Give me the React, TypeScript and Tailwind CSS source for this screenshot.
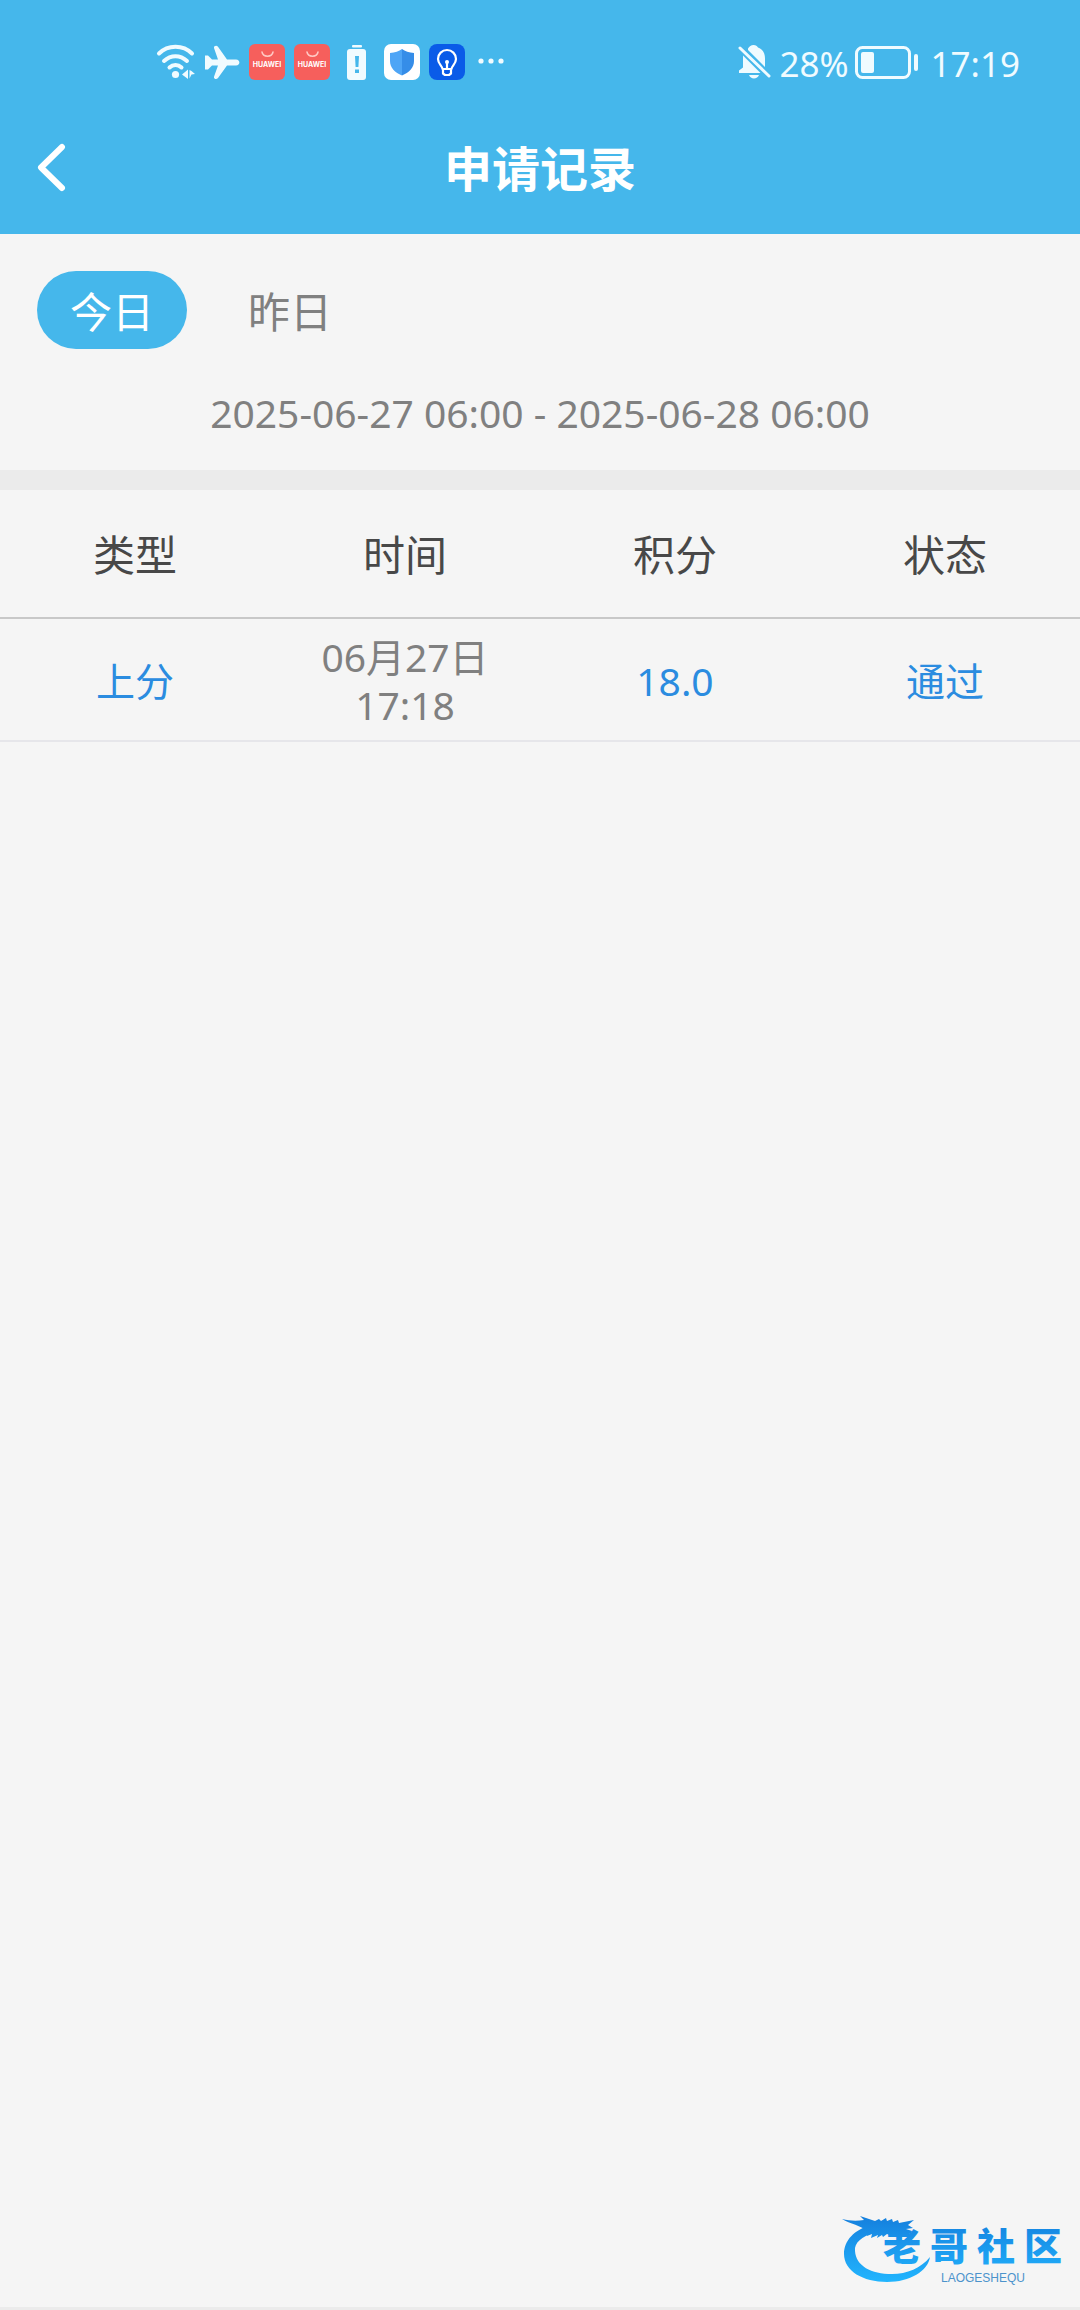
import React, { useState } from "react";

const tabs = ["今日", "昨日"];
const columns = ["类型", "时间", "积分", "状态"];
const records = [
  { type: "上分", date: "06月27日", time: "17:18", score: "18.0", status: "通过" },
];

function WifiIcon() {
  return (
    <svg width="39" height="36" viewBox="0 0 39 36" fill="none" stroke="#f0fbff" strokeWidth="4" strokeLinecap="round">
      <path d="M3 9.500C12 .5 27 .5 36 9.500" />
      <path d="M8 17c7-6.500 16-6.500 23 0" />
      <path d="M13.500 23.500c3.500-3.500 8.500-3.500 12 0" />
      <circle cx="19.500" cy="30.500" r="3.600" fill="#f0fbff" stroke="none" />
      <path d="M26 30.500l6-5v9.500zM33.500 26v8.500l2-4 3.500-.5-3.500-3z" fill="#f0fbff" stroke="none" />
    </svg>
  );
}

function PlaneIcon() {
  return (
    <svg width="36" height="36" viewBox="0 0 36 36" fill="#f0fbff">
      <path d="M1 11.500h3l4 4h6L10 4c-.5-2 2.500-3.200 4-1.200L23 15.500h9c4.500 0 4.500 6 0 6h-9L14 34c-1.500 2-4.500 1-4-1.200l4-11.300H8l-4 4H1z" />
    </svg>
  );
}

function StoreIcon() {
  return (
    <span className="flex h-9 w-9 flex-col items-center rounded-md bg-[#f65f5c]">
      <svg width="16" height="16" viewBox="0 0 16 16" fill="none" stroke="#ffc9c4" strokeWidth="1.500" strokeLinecap="round">
        <path d="M3 8c1 5.500 10 5.500 11 0" />
      </svg>
      <span className="font-[Inter] text-[7px] leading-[10px] font-bold text-white">HUAWEI</span>
    </span>
  );
}

function BatteryAlertIcon() {
  return (
    <svg width="36" height="36" viewBox="0 0 36 36" fill="#f0fbff">
      <rect x="13" y="1" width="10" height="2.500" rx="1" />
      <rect x="8" y="5" width="19" height="31" rx="3" />
      <path d="M16 12h4l-.6 11h-2.800zM16 25.500h4v3.500h-4z" fill="#45b7eb" />
    </svg>
  );
}

function ShieldIcon() {
  return (
    <svg width="36" height="36" viewBox="0 0 36 36">
      <rect width="36" height="36" rx="7" fill="#fff" />
      <path d="M18 5c3 2.500 7 3.500 12 4v8c0 7-5 11.500-12 14.500z" fill="#358de8" />
      <path d="M18 5C15 7.500 11 8.500 6 9v8c0 7 5 11.500 12 14.500z" fill="#4ea5f6" />
    </svg>
  );
}

function BulbIcon() {
  return (
    <svg width="36" height="36" viewBox="0 0 36 36" fill="none" stroke="#fff" strokeWidth="2.200" strokeLinecap="round" strokeLinejoin="round">
      <rect width="36" height="36" rx="8" fill="#0a5be8" stroke="none" />
      <path d="M13.500 25c0-3-4.500-5-4.500-10a9 9 0 0 1 18 0c0 5-4.500 7-4.500 10zM14 26v3.500l2 1.500h4l2-1.500V26M18 19v6" />
      <circle cx="18" cy="18" r="2" fill="#fff" stroke="none" />
    </svg>
  );
}

function DotsIcon() {
  return (
    <svg width="28" height="36" viewBox="0 0 28 36" fill="#f0fbff">
      <circle cx="3" cy="17" r="2.600" />
      <circle cx="13" cy="17" r="2.600" />
      <circle cx="23" cy="17" r="2.600" />
    </svg>
  );
}

function MutedBellIcon() {
  return (
    <svg width="34" height="36" viewBox="0 0 34 36" fill="#f0fbff">
      <path d="M11 4.500C12.500 2.500 14 1 16.500 1S20 2 21 3.500c5 2 7 6 7 11V23L11 6zM6 11.500L23.500 29H2v-2.500l4-3zM12 31h10c-1.500 4.500-8.500 4.500-10 0z" />
      <path d="M3 4l29 28" stroke="#f0fbff" strokeWidth="3" strokeLinecap="round" />
    </svg>
  );
}

function BatteryIcon() {
  return (
    <svg width="64" height="36" viewBox="0 0 64 36">
      <rect x="1.500" y="3.500" width="53" height="30" rx="6" fill="none" stroke="#f0fbff" strokeWidth="3" />
      <rect x="6" y="8" width="13" height="21" rx="2" fill="#f0fbff" />
      <rect x="59" y="10" width="4" height="17" rx="2" fill="#f0fbff" />
    </svg>
  );
}

function Watermark() {
  return (
    <svg width="226" height="76" viewBox="0 0 226 76">
      <defs>
        <linearGradient id="wave" gradientUnits="userSpaceOnUse" x1="0" y1="4" x2="0" y2="70">
          <stop offset="0" stopColor="#1580de" />
          <stop offset="1" stopColor="#22b6ff" />
        </linearGradient>
      </defs>
      <g fill="url(#wave)">
        {/* dragon body */}
        <path d="M32 12C14 16 4 28 4 41c0 17 19 28 43 28 23 0 41-11 43-25-9 11-23 17-38 17-21 0-36-8-37-23-1-8 7-15 19-18z" />
        {/* head, horns and whiskers */}
        <path d="M2 6c8 2 15 2 22 1l-4-4c5 2 10 3 15 5l4-2 2 2 5-3 1 3 5-2 1 3 5-2 1 3 15-3-6 5 5 3-7 1 6 2-1 3-9-1 1 2-9-1-2 2-5-2-4 3-1-2-5 3 1-3-7 3 1-4-5 2 1-4C21 12 10 11 2 6z" />
        <text y="47" className="font-['Noto_Sans_CJK_SC',sans-serif] text-[38px] font-black">
          <tspan x="43">老</tspan>
          <tspan x="90">哥</tspan>
          <tspan x="137">社</tspan>
          <tspan x="184">区</tspan>
        </text>
      </g>
      <text x="101" y="69" fill="#4c93cc" className="font-['Liberation_Sans',sans-serif] text-[12px]">
        LAOGESHEQU
      </text>
    </svg>
  );
}

export default function App() {
  const [active, setActive] = useState("今日");

  return (
    <div className="flex min-h-screen w-full flex-col bg-[#f5f5f5] font-['Noto_Sans','Noto_Sans_CJK_SC',sans-serif]">
      <header className="bg-[#45b7eb] text-white">
        <div className="flex items-center justify-between pt-11 pr-[60px] pb-7 pl-[156px] text-[#f0fbff]">
          <div className="flex h-9 items-center gap-[9px]">
            <WifiIcon />
            <PlaneIcon />
            <StoreIcon />
            <StoreIcon />
            <BatteryAlertIcon />
            <ShieldIcon />
            <BulbIcon />
            <span className="pl-1"><DotsIcon /></span>
          </div>
          <div className="flex h-9 items-center text-[35px] leading-9">
            <MutedBellIcon />
            <span className="pt-1 pr-1.5 pl-2">28%</span>
            <BatteryIcon />
            <span className="pt-1 pl-3">17:19</span>
          </div>
        </div>
        <div className="grid h-[126px] grid-cols-[100px_1fr_100px] items-center pb-1">
          <button type="button" aria-label="返回" className="pl-9">
            <svg width="32" height="52" viewBox="0 0 32 52" fill="none" stroke="#fff" strokeWidth="6" strokeLinecap="round" strokeLinejoin="round">
              <path d="M26 4L5 24.500L26 45" />
            </svg>
          </button>
          <h1 className="text-center text-[48px] leading-[60px] font-bold">申请记录</h1>
        </div>
      </header>

      <nav className="flex gap-7 px-[37px] pt-[37px]">
        {tabs.map((tab) => (
          <button
            key={tab}
            type="button"
            onClick={() => setActive(tab)}
            className={
              active === tab
                ? "h-[78px] w-[150px] rounded-full bg-[#45b7eb] pt-1 text-[42px] leading-[60px] text-white"
                : "h-[78px] w-[150px] rounded-full pt-1 text-[42px] leading-[60px] text-[#808080]"
            }
          >
            {tab}
          </button>
        ))}
      </nav>
      <p className="pt-[38px] pb-[31px] text-center text-[39px] leading-[52px] text-[#808080]">
        2025-06-27 06:00 - 2025-06-28 06:00
      </p>
      <div className="h-5 bg-[#ebebeb]" />

      <table className="w-full table-fixed text-center">
        <thead>
          <tr className="h-[128px] border-b-2 border-[#c8c8c8] text-[42px] text-[#484848]">
            {columns.map((column) => (
              <th key={column} scope="col" className="pt-0.5 font-normal">{column}</th>
            ))}
          </tr>
        </thead>
        <tbody>
          {records.map((record) => (
            <tr key={record.time} className="h-[123px] border-b-2 border-[#e6e6ea] text-[39px] leading-[48px] text-[#2b8ce0]">
              <td className="pt-0.5">{record.type}</td>
              <td className="pt-0.5 text-[#808080]">
                {record.date}
                <br />
                {record.time}
              </td>
              <td className="pt-0.5">{record.score}</td>
              <td className="pt-0.5">{record.status}</td>
            </tr>
          ))}
        </tbody>
      </table>

      <footer className="mt-auto border-b-[3px] border-[#ebebeb]">
        <div className="flex justify-end pr-[14px] pb-[18px]">
          <Watermark />
        </div>
      </footer>
    </div>
  );
}
